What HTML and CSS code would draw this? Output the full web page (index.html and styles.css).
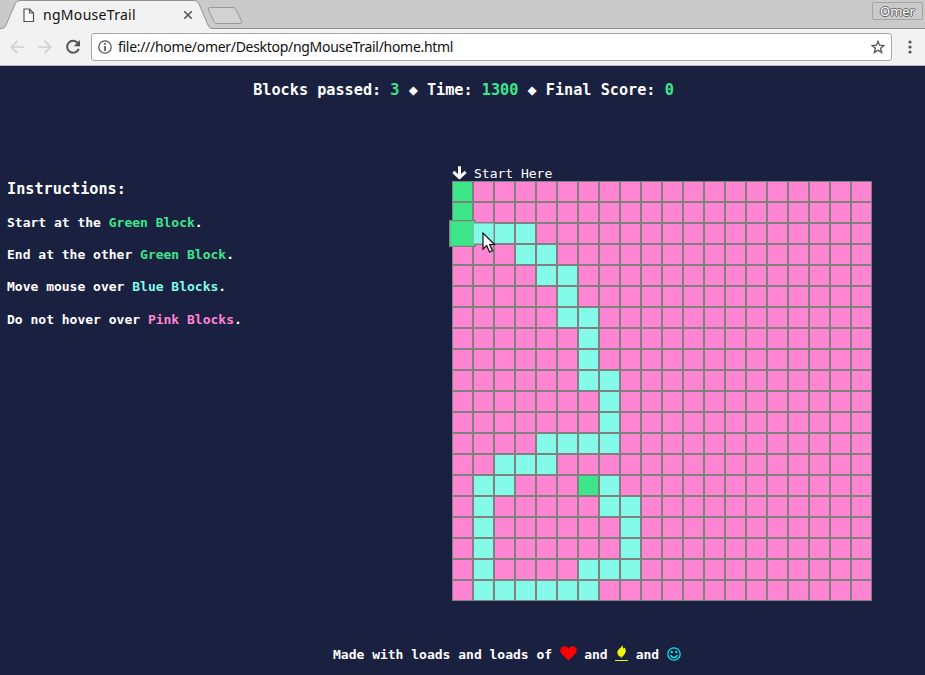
FILE: index.html
```
<!DOCTYPE html>
<html lang="en">
<head>
<meta charset="utf-8">
<title>ngMouseTrail</title>
<link rel="stylesheet" href="styles.css">
</head>
<body>
<header class="browser">
  <div class="tabs">
    <svg class="tab-shapes" width="260" height="29" viewBox="0 0 260 29">
      <path d="M0 28.5H2Q5 28 6 25L15.500 3Q17 .5 20 .5H194Q197 .5 198.500 3L208 25Q209.500 28.500 212 28.500H260V29H0Z" fill="#f2f2f2"/>
      <path d="M0 28.500H2Q5 28 6 25L15.500 3Q17 .5 20 .5H194Q197 .5 198.500 3L208 25Q209.500 28.500 212 28.500H260" fill="none" stroke="#929292"/>
      <path d="M210 7.500H233Q235 7.500 236 9.500L241.500 21Q242.500 23.500 240 23.500H217Q215 23.500 214 21.500L208.500 10Q207.500 7.500 210 7.500Z" fill="#d2d2d2" stroke="#999"/>
    </svg>
    <div class="tab">
      <svg width="12" height="15" viewBox="0 0 12 15"><path d="M1 1H6.500L10.500 5V13.500H1ZM6.500 1V5H10.500" fill="#fafafa" stroke="#555" stroke-width="1.200"/></svg>
      <span class="tab-title">ngMouseTrail</span>
      <svg width="10" height="10" viewBox="0 0 10 10"><path d="M1.200 1.200L8.800 8.800M8.800 1.200L1.200 8.800" stroke="#555" stroke-width="1.600"/></svg>
    </div>
    <div class="user">Omer</div>
  </div>
  <div class="toolbar">
    <svg class="nav" width="16" height="16" viewBox="0 0 16 16"><path d="M15 8H2.500M8.500 1.800L2.300 8L8.500 14.200" fill="none" stroke="#d0d0d0" stroke-width="1.700"/></svg>
    <svg class="nav" width="16" height="16" viewBox="0 0 16 16"><path d="M1 8H13.500M7.500 1.800L13.700 8L7.500 14.200" fill="none" stroke="#d0d0d0" stroke-width="1.700"/></svg>
    <svg class="nav" width="16" height="16" viewBox="0 0 16 16"><path d="M12.800 4A6 6 0 1 0 13.800 9.800" fill="none" stroke="#555" stroke-width="2"/><path d="M15 1V7.200H8.800Z" fill="#555"/></svg>
    <div class="address">
      <svg width="14" height="14" viewBox="0 0 14 14"><circle cx="7" cy="7" r="6.200" fill="none" stroke="#555" stroke-width="1.300"/><path d="M7 3V4.800M7 6V11" stroke="#555" stroke-width="1.700"/></svg>
      <span class="url">file:///home/omer/Desktop/ngMouseTrail/home.html</span>
      <svg width="14" height="14" viewBox="0 0 14 14"><path d="M7 1.300L8.600 5.200L12.900 5.500L9.600 8.200L10.700 12.500L7 10.200L3.300 12.500L4.400 8.200L1.100 5.500L5.400 5.200Z" fill="none" stroke="#555" stroke-width="1.300"/></svg>
    </div>
    <svg class="menu" width="4" height="14" viewBox="0 0 4 14"><g fill="#555"><circle cx="2" cy="2" r="1.600"/><circle cx="2" cy="7" r="1.600"/><circle cx="2" cy="12" r="1.600"/></g></svg>
  </div>
</header>
<main class="page">
  <div class="score">Blocks passed: <span class="green">3</span> ◆ Time: <span class="green">1300</span> ◆ Final Score: <span class="green">0</span></div>
  <div class="content">
    <section class="instructions">
      <h1>Instructions:</h1>
      <p>Start at the <span class="green">Green Block</span>.</p>
      <p>End at the other <span class="green">Green Block</span>.</p>
      <p>Move mouse over <span class="blue">Blue Blocks</span>.</p>
      <p>Do not hover over <span class="pink">Pink Blocks</span>.</p>
    </section>
    <section class="game">
      <div class="start">
        <svg width="15" height="14" viewBox="0 0 15 14"><path d="M7.500 .3V11M1.400 5.800L7.500 11.700L13.600 5.800" fill="none" stroke="#fff" stroke-width="3" stroke-linejoin="round"/></svg>
        <span>Start Here</span>
      </div>
      <div class="board" id="board"></div>
      <svg class="cursor" width="15" height="22" viewBox="0 0 15 22"><path d="M1 1V17L4.700 13.500L7.500 20L10.500 18.700L7.700 12.500H12.500Z" fill="#fff" stroke="#111" stroke-width="1.200"/></svg>
    </section>
  </div>
  <footer class="credits">
    <span>Made with loads and loads of</span>
    <svg class="heart" width="17" height="15" viewBox="0 0 17 15"><path d="M8.500 14.500L1.300 7.500Q-.6 4.800 1 2Q2.300 .3 4.600 .3Q7.200 .3 8.500 2.700Q9.800 .3 12.400 .3Q14.700 .3 16 2Q17.600 4.800 15.700 7.500Z" fill="red"/></svg>
    <span>and</span>
    <svg class="fire" width="13" height="16" viewBox="0 0 13 16"><path d="M7 0Q8.300 1.800 8 3.600Q9 3.300 9.800 2.500Q11.600 5.500 10 8.500Q8.500 11.200 5.500 13.300Q6 11.800 5.300 10.800Q4.600 11.200 4.300 11.800Q2 9.300 2.300 6.800Q2.700 4.800 5 3.200Q7.200 1.700 7 0Z" fill="#f1f708"/><path d="M0 15.500H13" stroke="#f1f708"/></svg>
    <span>and</span>
    <svg class="smile" width="14" height="14" viewBox="0 0 14 14"><g fill="none" stroke="#08e6f0" stroke-width="1.300"><circle cx="7" cy="7" r="6.200"/><path d="M3.700 8Q4.200 10.500 7 10.500Q9.800 10.500 10.300 8"/></g><g fill="#08e6f0"><circle cx="4.800" cy="4.900" r="1.200"/><circle cx="9.200" cy="4.900" r="1.200"/></g></svg>
  </footer>
</main>
<script src="board.js"></script>
</body>
</html>
```
FILE: styles.css
```
* { box-sizing: border-box; }
body { margin: 0; width: 925px; height: 675px; overflow: hidden; background: #1a2140; color: #fff; font-family: "DejaVu Sans Mono", monospace; }
svg { display: block; flex: none; }
.browser { height: 66px; font-family: "Noto Sans", sans-serif; color: #111; }
.tabs { position: relative; height: 29px; display: flex; justify-content: space-between; background: #cacaca; border-bottom: 1px solid #929292; }
.tab-shapes { position: absolute; left: 0; top: 0; }
.tab { position: relative; display: flex; align-items: center; width: 193px; height: 29px; padding: 1px 0 0 23px; }
.tab-title { width: 140px; margin-left: 8px; margin-right: 12px; padding-bottom: 2px; font-size: 14px; letter-spacing: .3px; }
.user { width: 51px; height: 18px; margin: 2px 2px 0 0; border: 1px solid #a5a5a5; border-radius: 2px; text-align: center; font-size: 13px; line-height: 17px; color: #fff; text-shadow: 1px 0 #666, -1px 0 #666, 0 1px #666, 0 -1px #666; }
.toolbar { display: flex; align-items: center; height: 37px; padding: 0 13px 0 9px; background: #f2f2f2; border-bottom: 1px solid #b4b4b4; }
.nav { margin-right: 12px; }
.nav:nth-child(3) { margin-right: 10px; }
.address { display: flex; align-items: center; width: 801px; height: 28px; padding: 0 6px; border: 1px solid #a8a8a8; border-radius: 3px; background: #fff; }
.url { flex: 1; margin-left: 6px; padding-bottom: 2px; font-size: 14px; letter-spacing: -.3px; white-space: nowrap; }
.menu { margin-left: auto; }
.page { height: 609px; padding-top: 14px; }
.score { height: 20px; font-size: 15.2px; line-height: 20px; font-weight: bold; text-align: center; padding-left: 2px; }
.green { color: #3ee68a; }
.blue { color: #84fae8; }
.pink { color: #ff85d2; }
.content { display: grid; grid-template-columns: 445px 420px; padding: 65px 0 0 7px; }
.instructions { padding-top: 14px; font-size: 13px; font-weight: bold; }
.instructions h1 { margin: 0 0 16px; font-size: 15.2px; line-height: 20px; }
.instructions p { margin: 0 0 16px; line-height: 16px; }
.instructions p:last-child { margin-top: 17px; }
.game { position: relative; }
.start { display: flex; align-items: center; gap: 7px; height: 16px; font-size: 13px; line-height: 16px; }
.start span { padding-top: 2px; }
.board { display: grid; grid-template-columns: repeat(20, 21px); grid-auto-rows: 21px; }
.cell { border: 1px solid #808080; background: #ff85d2; }
.cell.path { background: #84fae8; }
.cell.end { background: #3ee68a; }
.cell.hovered { position: relative; z-index: 1; transform: scale(1.286); }
.cell.next { position: relative; z-index: 2; border-color: #8abdb5; }
.cursor { position: absolute; left: 30px; top: 67px; z-index: 3; }
.credits { display: flex; align-items: center; height: 20px; margin-top: 43px; padding-left: 333px; font-size: 13px; font-weight: bold; }
.heart { margin: -1px 7px 0 8px; }
.fire { margin: -2px 8px 0 7px; }
.smile { margin-left: 8px; }
```
FILE: board.js
```
// G: green block, B: blue trail, H: hovered block, N: block under the pointer
const rows = [
  "G...................",
  "G...................",
  "HNBB................",
  "...BB...............",
  "....BB..............",
  ".....B..............",
  ".....BB.............",
  "......B.............",
  "......B.............",
  "......BB............",
  ".......B............",
  ".......B............",
  "....BBBB............",
  "..BBB...............",
  ".BB...GB............",
  ".B.....BB...........",
  ".B......B...........",
  ".B......B...........",
  ".B....BBB...........",
  ".BBBBBB............."
];
const kinds = { G: "end", B: "path", H: "end hovered", N: "path next", ".": "" };
const board = document.getElementById("board");
for (const key of rows.join("")) {
  const cell = document.createElement("div");
  cell.className = ("cell " + kinds[key]).trim();
  board.appendChild(cell);
}
```
